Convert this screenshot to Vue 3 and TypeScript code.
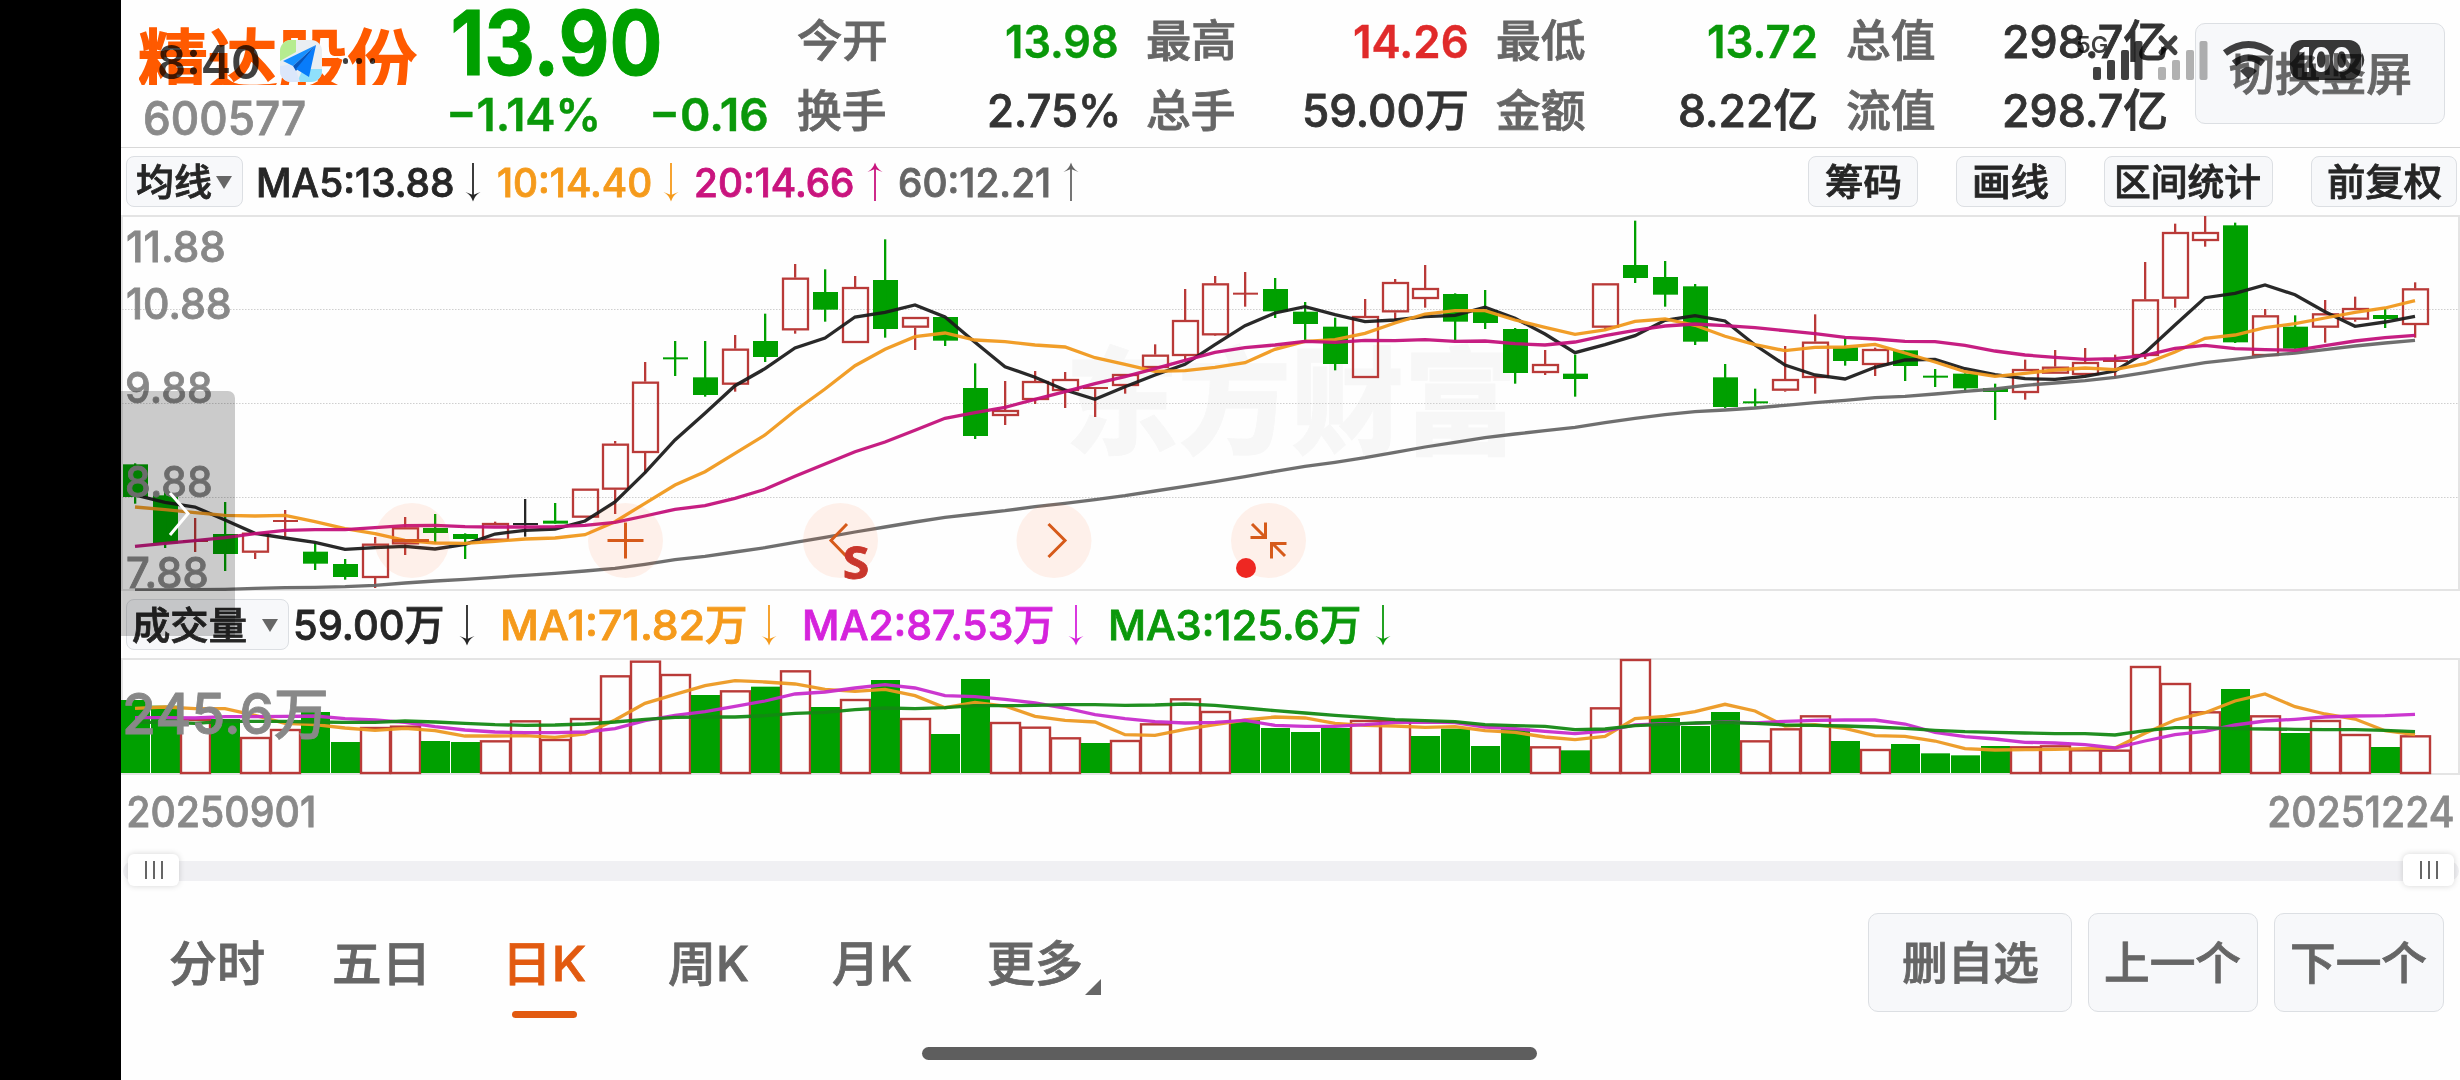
<script setup lang="ts">
import type { Directive } from 'vue'

// Stretches a label horizontally so that its ink covers exactly the given width.
const vFit: Directive<HTMLElement, number> = {
  mounted(el, { value }) {
    const ctx = document.createElement('canvas').getContext('2d')
    if (!ctx) return
    const cs = getComputedStyle(el)
    ctx.font = `${cs.fontWeight} ${cs.fontSize} ${cs.fontFamily}`
    const m = ctx.measureText((el.textContent ?? '').trim())
    const ink = m.actualBoundingBoxLeft + m.actualBoundingBoxRight
    el.style.width = `${value}px`
    el.style.transform = `scaleX(${value / ink}) translateX(${m.actualBoundingBoxLeft}px)`
  },
}

type Stat = { label: string; value: string; w: number; tone: string }
const stats: Stat[] = [
  { label: '今开', value: '13.98', w: 110, tone: 'down' },
  { label: '最高', value: '14.26', w: 112, tone: 'up' },
  { label: '最低', value: '13.72', w: 107, tone: 'down' },
  { label: '总值', value: '298.7亿', w: 161, tone: 'ink' },
  { label: '换手', value: '2.75%', w: 127, tone: 'ink' },
  { label: '总手', value: '59.00万', w: 162, tone: 'ink' },
  { label: '金额', value: '8.22亿', w: 136, tone: 'ink' },
  { label: '流值', value: '298.7亿', w: 161, tone: 'ink' },
]

type Indicator = { text: string; w: number; color: string; up: boolean; gap: number; lead: number }
const priceMas: Indicator[] = [
  { text: 'MA5:13.88', w: 194, color: '#262626', up: false, gap: 12, lead: 16 },
  { text: '10:14.40', w: 153, color: '#f59a1b', up: false, gap: 12, lead: 17.5 },
  { text: '20:14.66', w: 157, color: '#c9147e', up: true, gap: 14, lead: 17 },
  { text: '60:12.21', w: 149, color: '#666666', up: true, gap: 14, lead: 17 },
]
const volMas: Indicator[] = [
  { text: '59.00万', w: 147, color: '#262626', up: false, gap: 17, lead: 6 },
  { text: 'MA1:71.82万', w: 242, color: '#f59a1b', up: false, gap: 16.5, lead: 27.5 },
  { text: 'MA2:87.53万', w: 247, color: '#d523dc', up: false, gap: 16, lead: 28 },
  { text: 'MA3:125.6万', w: 248, color: '#0b980b', up: false, gap: 16, lead: 27 },
]
const tools = [
  { text: '筹码', w: 74, box: 110 },
  { text: '画线', w: 74, box: 110 },
  { text: '区间统计', w: 143, box: 169 },
  { text: '前复权', w: 113, box: 146 },
]
const scale = [
  { text: '11.88', w: 97, y: 231 },
  { text: '10.88', w: 103, y: 288 },
  { text: '9.88', w: 84, y: 372 },
  { text: '8.88', w: 84, y: 466 },
  { text: '7.88', w: 80, y: 557 },
]
const tabs = [
  { text: '分时', w: 94, lead: 0, on: false },
  { text: '五日', w: 90, lead: 70, on: false },
  { text: '日K', w: 75, lead: 86, on: true },
  { text: '周K', w: 79, lead: 84, on: false },
  { text: '月K', w: 78, lead: 85, on: false },
  { text: '更多', w: 92, lead: 78, on: false },
]
const actions = [
  { text: '删自选', w: 135, box: 204 },
  { text: '上一个', w: 134, box: 170 },
  { text: '下一个', w: 134, box: 170 },
]

// Candles: kind, high, body top, body bottom, low; levels are thirds of a pixel below y = 210.
// r = hollow rise, g = solid fall, R / G / K = flat body drawn as a bar.
type Candle = [string, number, number, number, number]
const candles: Candle[] = [
  ['g', 760, 763, 861, 881], ['g', 840, 856, 1000, 1014], ['R', 924, 990, 996, 1026], ['g', 876, 972, 1032, 1083],
  ['r', 968, 968, 1028, 1047], ['R', 900, 930, 936, 980], ['g', 1000, 1025, 1061, 1080], ['g', 1047, 1062, 1101, 1109],
  ['r', 981, 1001, 1104, 1134], ['r', 921, 952, 1003, 1035], ['g', 912, 954, 969, 1000], ['g', 970, 972, 987, 1047],
  ['r', 935, 939, 992, 992], ['K', 867, 939, 945, 980], ['g', 879, 932, 941, 941], ['r', 836, 836, 923, 923],
  ['r', 693, 701, 839, 912], ['r', 456, 515, 729, 790], ['G', 393, 442, 448, 498], ['g', 393, 502, 555, 560],
  ['r', 375, 416, 524, 545], ['g', 311, 393, 441, 456], ['r', 162, 203, 361, 371], ['g', 178, 246, 299, 335],
  ['r', 198, 231, 399, 399], ['g', 88, 210, 357, 383], ['r', 321, 321, 353, 420], ['g', 321, 321, 392, 408],
  ['g', 460, 534, 678, 687], ['r', 513, 600, 618, 645], ['r', 483, 513, 570, 582], ['r', 486, 507, 543, 594],
  ['R', 531, 531, 537, 621], ['r', 492, 492, 528, 551], ['r', 403, 434, 474, 474], ['r', 237, 330, 438, 450],
  ['r', 198, 220, 376, 378], ['R', 186, 248, 254, 290], ['g', 204, 237, 304, 324], ['g', 276, 305, 342, 390],
  ['g', 323, 350, 462, 481], ['r', 267, 318, 504, 504], ['r', 207, 216, 307, 330], ['r', 165, 234, 267, 293],
  ['g', 250, 252, 335, 390], ['g', 240, 300, 339, 357], ['g', 354, 357, 489, 521], ['r', 420, 462, 489, 495],
  ['g', 434, 491, 507, 560], ['r', 220, 220, 353, 358], ['g', 32, 165, 204, 219], ['g', 153, 201, 254, 290],
  ['g', 222, 229, 395, 405], ['g', 462, 502, 591, 594], ['G', 536, 574, 580, 590], ['r', 408, 507, 542, 545],
  ['r', 313, 395, 504, 551], ['g', 384, 412, 453, 467], ['r', 413, 417, 465, 498], ['g', 421, 421, 468, 513],
  ['G', 477, 497, 503, 531], ['g', 490, 491, 535, 543], ['g', 521, 534, 546, 630], ['r', 449, 477, 549, 569],
  ['r', 420, 470, 491, 491], ['r', 414, 456, 495, 495], ['R', 434, 450, 456, 504], ['r', 156, 268, 438, 447],
  ['r', 41, 66, 266, 293], ['r', 18, 66, 93, 110], ['g', 38, 46, 397, 399], ['r', 297, 316, 438, 438],
  ['g', 316, 350, 416, 416], ['r', 270, 310, 353, 398], ['r', 260, 294, 329, 335], ['g', 297, 315, 327, 354],
  ['r', 217, 235, 345, 383],
]
const ma5 = [855, 877, 891, 930, 970, 984, 997, 1018, 1013, 1009, 1017, 1003, 972, 961, 957, 933, 876, 788, 690, 610, 527, 476, 414, 384, 321, 307, 285, 321, 397, 470, 502, 540, 568, 530, 495, 463, 404, 347, 309, 290, 314, 335, 330, 320, 316, 292, 325, 372, 428, 404, 377, 331, 317, 333, 405, 465, 495, 507, 472, 450, 448, 476, 494, 506, 508, 499, 483, 428, 345, 263, 250, 225, 254, 305, 349, 336, 319]
const ma10 = [891, 899, 908, 916, 918, 916, 935, 956, 971, 991, 999, 1000, 994, 987, 984, 974, 935, 880, 825, 785, 730, 675, 602, 537, 467, 418, 380, 369, 390, 395, 405, 411, 443, 463, 484, 482, 472, 458, 418, 394, 389, 370, 339, 312, 302, 302, 330, 352, 373, 360, 334, 327, 346, 379, 404, 422, 412, 411, 403, 429, 456, 485, 499, 490, 480, 474, 479, 461, 426, 385, 375, 353, 341, 324, 307, 294, 272]
const ma20 = [1009, 1000, 992, 983, 971, 961, 959, 959, 953, 947, 946, 950, 951, 951, 950, 946, 937, 918, 898, 887, 865, 838, 799, 762, 725, 696, 661, 625, 608, 592, 568, 545, 521, 500, 476, 451, 427, 413, 405, 394, 397, 391, 392, 389, 394, 393, 401, 405, 396, 377, 361, 348, 342, 347, 353, 362, 371, 382, 387, 394, 395, 406, 423, 435, 442, 448, 446, 436, 415, 406, 416, 419, 421, 407, 393, 383, 376]
const ma60 = [1140, 1140, 1139, 1138, 1135, 1133, 1132, 1130, 1126, 1119, 1113, 1108, 1102, 1096, 1090, 1083, 1075, 1063, 1049, 1039, 1026, 1013, 997, 982, 966, 951, 936, 922, 912, 902, 890, 880, 869, 857, 843, 829, 815, 800, 784, 769, 757, 743, 727, 711, 697, 683, 672, 662, 652, 638, 625, 614, 605, 600, 594, 586, 578, 571, 563, 559, 552, 544, 537, 526, 519, 512, 502, 488, 473, 458, 448, 437, 429, 419, 408, 399, 391]

// Volume bars: top edge in thirds of a pixel below y = 640, negative for falling days.
const volumes = [-180, -197, 237, -237, 291, 267, -216, -306, 261, 257, -303, -306, 301, 241, 297, 234, 106, 62, 102, -165, 151, -140, 91, -201, 177, -120, 234, -282, -117, 246, 260, 292, -309, 300, 250, 175, 213, -240, -264, -276, -264, 240, 240, -288, -266, -318, -266, 319, -331, 202, 57, -234, -258, -216, 301, 265, 226, -303, 327, -312, -340, -346, -318, 319, 316, 328, 329, 78, 129, 214, -147, 226, -279, 240, 282, -321, 286]
const vma1 = [205, 201, 206, 206, 226, 250, 254, 264, 271, 265, 272, 288, 288, 287, 292, 282, 240, 190, 163, 137, 122, 126, 132, 148, 154, 148, 167, 203, 187, 198, 229, 241, 246, 284, 286, 268, 254, 240, 231, 234, 250, 256, 258, 262, 260, 272, 277, 291, 299, 289, 236, 229, 215, 193, 213, 258, 254, 265, 287, 289, 303, 326, 330, 329, 328, 326, 324, 280, 240, 218, 183, 162, 200, 222, 237, 272, 284]
const vma2 = [233, 233, 234, 230, 230, 229, 228, 236, 240, 247, 260, 270, 276, 278, 278, 276, 266, 242, 226, 215, 199, 183, 162, 156, 144, 134, 144, 167, 170, 178, 189, 204, 224, 236, 245, 249, 247, 241, 256, 259, 259, 254, 247, 246, 248, 261, 266, 274, 281, 273, 255, 251, 250, 246, 249, 244, 241, 240, 240, 252, 277, 290, 297, 307, 309, 314, 324, 303, 284, 274, 255, 243, 238, 231, 228, 227, 223]
const vma3 = [247, 247, 250, 244, 244, 244, 246, 247, 247, 243, 246, 250, 254, 256, 255, 252, 246, 238, 232, 231, 231, 227, 220, 217, 209, 204, 206, 203, 197, 197, 196, 194, 194, 196, 195, 192, 196, 204, 212, 219, 226, 232, 239, 242, 245, 254, 257, 259, 269, 267, 257, 253, 249, 247, 250, 255, 256, 258, 261, 265, 271, 275, 277, 279, 281, 281, 285, 272, 263, 263, 266, 267, 268, 269, 269, 271, 275]

const cx = (i: number) => 135 + 30 * i
const py = (v: number) => 210 + v / 3
const vy = (v: number) => 640 + v / 3
const line = (vals: number[], y: (v: number) => number) =>
  vals.map((v, i) => `${cx(i)},${y(v).toFixed(1)}`).join(' ')

const RED = '#b93a38'
const tint = (k: string) => (k === 'K' ? '#262626' : k.toLowerCase() === 'g' ? '#00a000' : RED)

const priceLines = [
  { pts: line(ma60, py), color: '#666' },
  { pts: line(ma5, py), color: '#1c1c1c' },
  { pts: line(ma10, py), color: '#f0981c' },
  { pts: line(ma20, py), color: '#c2107a' },
]
const volLines = [
  { pts: line(vma1, vy), color: '#ec9820' },
  { pts: line(vma2, vy), color: '#c82acc' },
  { pts: line(vma3, vy), color: '#128812' },
]
</script>

<template>
  <div class="screen">
    <div class="notch"></div>
    <main class="page">
      <header class="head">
        <div class="ident">
          <div class="name"><span v-fit="277" class="t">精达股份</span></div>
          <span v-fit="160" class="t code">600577</span>
        </div>
        <div class="quote">
          <span v-fit="205" class="t price">13.90</span>
          <div class="change">
            <span v-fit="147" class="t">−1.14%</span>
            <span v-fit="114" class="t">−0.16</span>
          </div>
        </div>
        <div class="stats">
          <div v-for="s in stats" :key="s.label" class="stat">
            <span v-fit="87.5" class="t lab">{{ s.label }}</span>
            <span v-fit="s.w" class="t" :class="s.tone">{{ s.value }}</span>
          </div>
        </div>
        <button class="btn rotate"><span v-fit="180" class="t">切换竖屏</span></button>
      </header>

      <section class="bar top">
        <button class="btn pick ma"><span v-fit="74" class="t">均线</span><i class="tri"></i></button>
        <template v-for="m in priceMas" :key="m.text">
          <span v-fit="m.w" class="t low" :style="{ color: m.color, marginLeft: m.lead + 'px' }">{{ m.text }}</span>
          <svg class="arr" width="16" height="40" :style="{ color: m.color, marginLeft: m.gap + 'px' }">
            <g :transform="m.up ? 'rotate(180 8 20)' : ''">
              <path d="M8 1V34" stroke="currentColor" stroke-width="1.8" />
              <path d="M.5 30Q6 33 8 39.500Q10 33 15.500 30L8 33Z" fill="currentColor" />
            </g>
          </svg>
        </template>
        <div class="tools">
          <button v-for="b in tools" :key="b.text" class="btn" :style="{ width: b.box + 'px' }">
            <span v-fit="b.w" class="t">{{ b.text }}</span>
          </button>
        </div>
      </section>

      <section class="chart">
        <span v-fit="440" class="t mark">东方财富</span>
        <svg class="plot" width="2339" height="376" viewBox="121 215 2339 376">
          <path d="M122 216H2459V590H122Z" fill="none" stroke="#e4e4e4" stroke-width="2" />
          <path d="M122 309.500H2458M122 403.500H2458M122 497.500H2458" stroke="#cfcfcf" stroke-dasharray="1.500 1.500" />
          <g v-for="(c, i) in candles" :key="i">
            <rect v-if="c[0] === 'r'" :x="cx(i) - 12" :y="py(c[2]) + 1" width="25" :height="(c[3] - c[2]) / 3 - 2" fill="none" :stroke="RED" stroke-width="2.3" />
            <rect v-else :x="cx(i) - 12" :y="py(c[2])" width="25" :height="(c[3] - c[2]) / 3" :fill="tint(c[0])" />
            <template v-if="c[0] === 'r'">
              <rect :x="cx(i) - 1" :y="py(c[1])" width="2.3" :height="(c[2] - c[1]) / 3" :fill="RED" />
              <rect :x="cx(i) - 1" :y="py(c[3])" width="2.3" :height="(c[4] - c[3]) / 3" :fill="RED" />
            </template>
            <rect v-else :x="cx(i) - 1" :y="py(c[1])" width="2.3" :height="(c[4] - c[1]) / 3" :fill="tint(c[0])" />
          </g>
          <polyline v-for="l in priceLines" :key="l.color" :points="l.pts" fill="none" :stroke="l.color" stroke-width="3.3" opacity=".94" />
        </svg>
        <span v-for="s in scale" :key="s.text" v-fit="s.w" class="t tick" :style="{ top: s.y - 215 + 'px' }">{{ s.text }}</span>
        <svg class="plot" width="2339" height="376" viewBox="121 215 2339 376" fill="none" stroke="#d65a1a" stroke-width="3">
          <g fill="#ff5a14" fill-opacity=".085" stroke="none">
            <circle v-for="x in [412, 625.5, 840.5, 1054, 1268.5]" :key="x" :cx="x" cy="540.500" r="37.500" />
          </g>
          <path d="M393 540.500H429M607.500 540.500H643.500M625.500 522.500V558.500" />
          <path d="M847 524L831 540.500L847 557M1048.500 524L1065 540.500L1048.500 557" />
          <path d="M1252 524L1265 537M1265.500 522.500V537.500H1250.500M1285 556L1272 543M1271.500 558.500V543.500H1286.500" />
          <circle cx="1246" cy="568" r="10" fill="#ee2722" stroke="none" />
        </svg>
        <span v-fit="23" class="t trade">S</span>
      </section>

      <section class="bar vol">
        <button class="btn pick vl"><span v-fit="113" class="t">成交量</span><i class="tri"></i></button>
        <template v-for="m in volMas" :key="m.text">
          <span v-fit="m.w" class="t low" :style="{ color: m.color, marginLeft: m.lead + 'px' }">{{ m.text }}</span>
          <svg class="arr" width="16" height="42" :style="{ color: m.color, marginLeft: m.gap + 'px' }">
            <path d="M8 1V36" stroke="currentColor" stroke-width="1.8" />
            <path d="M.5 32Q6 35 8 41.500Q10 35 15.500 32L8 35Z" fill="currentColor" />
          </svg>
        </template>
      </section>

      <section class="volume">
        <svg class="plot" width="2339" height="118" viewBox="121 658 2339 118">
          <path d="M122 659H2459V774H122Z" fill="none" stroke="#e4e4e4" stroke-width="2" />
          <template v-for="(v, i) in volumes" :key="i">
            <rect v-if="v < 0" :x="cx(i) - 14" :y="vy(-v)" width="29" :height="773 - vy(-v)" fill="#00a000" />
            <rect v-else :x="cx(i) - 14" :y="vy(v) + 1" width="29" :height="772 - vy(v)" fill="#fefefe" :stroke="RED" stroke-width="2.4" />
          </template>
          <polyline v-for="l in volLines" :key="l.color" :points="l.pts" fill="none" :stroke="l.color" stroke-width="3.3" opacity=".94" />
        </svg>
        <span v-fit="201" class="t vtick">245.6万</span>
      </section>

      <div class="dates"><span v-fit="186" class="t">20250901</span><span v-fit="184" class="t">20251224</span></div>

      <div class="range">
        <div class="track"></div>
        <div class="grip a"><i></i><i></i><i></i></div>
        <div class="grip b"><i></i><i></i><i></i></div>
      </div>

      <footer class="foot">
        <nav class="tabs">
          <div v-for="t in tabs" :key="t.text" class="tab" :class="{ on: t.on }" :style="{ marginLeft: t.lead + 'px' }">
            <span v-fit="t.w" class="t low">{{ t.text }}</span>
          </div>
          <svg class="more" width="16" height="16"><path d="M16 0V16H0Z" fill="#666" /></svg>
        </nav>
        <div class="acts">
          <button v-for="b in actions" :key="b.text" class="btn" :style="{ width: b.box + 'px' }">
            <span v-fit="b.w" class="t low">{{ b.text }}</span>
          </button>
        </div>
      </footer>
      <div class="home"></div>
    </main>

    <div class="drawer">
      <svg width="114" height="245" fill="none" stroke="#fff" stroke-width="3"><path d="M49 102L67 122.500L49 144" /></svg>
    </div>

    <div class="status-l">
      <span v-fit="100" class="t">8:40</span>
      <svg class="app" width="42" height="42" viewBox="0 0 42 42">
        <defs><clipPath id="tile"><rect width="42" height="42" rx="11" /></clipPath></defs>
        <g clip-path="url(#tile)">
          <rect width="42" height="42" fill="#e9eef2" />
          <path d="M0 0H16V12L0 21Z" fill="#b5ec90" />
          <path d="M17 42L23 29H42V42Z" fill="#8fe0fb" />
          <path d="M0 26L14 24L20 42H0Z" fill="#dbe7fb" />
          <path d="M36 5L3 21L13 26Z" fill="#1690ff" />
          <path d="M36 5L13 26L16 31Z" fill="#0756bd" />
          <path d="M36 5L16 29L29 37Z" fill="#087cfa" />
        </g>
      </svg>
      <i class="dot"></i><i class="dot"></i><i class="dot"></i>
    </div>

    <div class="status-r">
      <span v-fit="30" class="t net">5G</span>
      <svg class="radio" width="300" height="50" viewBox="2070 34 300 50">
        <g fill="#000" fill-opacity=".75">
          <rect x="2093" y="67" width="8" height="13" rx="2" /><rect x="2107" y="60" width="8" height="20" rx="2" />
          <rect x="2121" y="50" width="8" height="30" rx="2" /><rect x="2134.500" y="41" width="8" height="39" rx="2" />
        </g>
        <g fill="#000" fill-opacity=".3">
          <rect x="2158" y="67" width="8" height="13" rx="2" /><rect x="2172" y="60" width="8" height="20" rx="2" />
          <rect x="2186" y="50" width="8" height="30" rx="2" /><rect x="2199.500" y="41" width="8" height="39" rx="2" />
        </g>
        <g fill="none" stroke="#000" stroke-opacity=".75">
          <path d="M2161 38L2175 52.500M2175 38L2161 52.500" stroke-width="5" stroke-linecap="round" />
          <path d="M2225 53Q2248.500 36 2272 53M2234 63.500Q2248.500 52 2263 63.500" stroke-width="7" />
        </g>
        <path d="M2240 71Q2248.500 63 2257 71L2248.500 79.500Z" fill="#000" fill-opacity=".75" />
        <rect x="2290" y="40" width="71" height="40" rx="12" fill="#000" fill-opacity=".78" />
        <path d="M2361.500 52Q2367 60 2361.500 68Z" fill="#000" fill-opacity=".78" />
      </svg>
      <span v-fit="52" class="t pct">100</span>
    </div>
  </div>
</template>

<style>
body { margin: 0; }
</style>

<style scoped>
.screen { position: relative; display: flex; width: 2460px; height: 1080px; overflow: hidden; background: #fefefe; font-family: Inter, "Noto Sans CJK SC", sans-serif; font-weight: 500; color: #262626; }
.notch { flex: none; width: 121px; background: #000; }
.page { flex: none; width: 2339px; display: flex; flex-direction: column; }
.t { display: inline-block; flex: none; white-space: nowrap; text-align: left; line-height: 1; transform-origin: 0 50%; -webkit-text-stroke: .8px currentColor; }
.low { padding-top: 2px; }
.btn { display: flex; align-items: center; justify-content: center; flex: none; box-sizing: border-box; padding: 0; margin: 0; font: inherit; color: inherit; background: #f7f8fa; border: 1.5px solid #dcdfe3; border-radius: 8px; }

.head { display: flex; height: 147px; box-sizing: content-box; border-bottom: 1px solid #d8d8d8; }
.ident { width: 277px; margin-left: 17.5px; padding-top: 20px; }
.name { height: 65px; overflow: hidden; font-size: 70px; color: #ff5a00; margin-right: -4px; }
.name .t { -webkit-text-stroke-width: 2px; }
.code { font-size: 46px; color: #8a8a8a; margin: 10px 0 0 6px; }
.quote { width: 318px; margin-left: 34px; color: #00a000; }
.price { font-size: 89px; font-weight: 700; margin: -2px 0 0 4.5px; display: block; -webkit-text-stroke-width: 1px; }
.change { display: flex; justify-content: space-between; font-size: 45px; font-weight: 600; margin-top: 5px; color: #0a980a; padding: 0 .5px; }
.change .t, .down, .up { -webkit-text-stroke-width: .4px; }
.stats { display: grid; grid-template-columns: repeat(4, 319.5px); grid-auto-rows: 69.5px; column-gap: 30.2px; margin: 6.5px .5px 0 30px; font-size: 45px; height: 140px; }
.stat { display: flex; align-items: center; justify-content: space-between; }
.lab { color: #666; font-size: 44px; }
.down { color: #0a980a; font-weight: 600; }
.up { color: #e02a2a; font-weight: 600; }
.ink { color: #333; }
.rotate { width: 250px; height: 101px; margin: 23px 0 0 28px; padding-top: 2px; font-size: 45px; color: #666; border-radius: 10px; }

.bar { display: flex; align-items: center; height: 67px; flex: none; }
.top { font-size: 39px; }
.bar .btn { height: 51px; font-size: 37px; padding-top: 1px; }
.pick.ma { width: 117px; margin-left: 4.5px; justify-content: flex-start; padding-left: 10px; }
.bar .pick.vl { width: 163.5px; margin-left: 4.5px; justify-content: flex-start; padding-left: 6px; font-size: 38px; }
.tri { width: 0; height: 0; border: 8px solid transparent; border-top: 13px solid #666; border-bottom: 0; margin-left: 5px; }
.vl .tri { margin-left: 16px; }
.arr { flex: none; display: block; overflow: visible; }
.tools { display: flex; gap: 38px; margin-left: auto; margin-right: 3px; }
.vol { font-size: 41.5px; }

.chart, .volume { position: relative; flex: none; }
.chart { height: 376px; }
.volume { height: 118px; }
.plot { position: absolute; left: 0; top: 0; display: block; }
.mark { position: absolute; left: 949px; top: 130px; font-size: 116px; font-weight: 900; color: #f7f7f7; }
.tick { position: absolute; left: 5.5px; font-size: 42.5px; line-height: 31px; color: #888; }
.trade { position: absolute; left: 724px; top: 325px; font: 700 44px/44px "Open Sans", sans-serif; color: #c9362c; }
.vtick { position: absolute; left: 4px; top: 28px; font-size: 56px; color: #888; }

.dates { display: flex; justify-content: space-between; padding: 15px 7px 0; font-size: 42px; color: #8a8a8a; height: 63px; box-sizing: border-box; flex: none; margin-bottom: 15px; }
.range { position: relative; height: 32px; flex: none; }
.track { position: absolute; left: 2px; right: 1px; top: 7px; height: 20px; border-radius: 10px; background: #f0f0f3; }
.grip { position: absolute; top: 0; width: 51px; height: 32px; border-radius: 6px; background: #fff; box-shadow: 0 0 6px rgba(0, 0, 0, .16); display: flex; align-items: center; justify-content: center; gap: 6px; }
.grip.a { left: 7px; }
.grip.b { right: 6px; }
.grip i { width: 2px; height: 18px; background: #666; }

.foot { display: flex; justify-content: space-between; margin-top: 27px; height: 99px; flex: none; color: #666; }
.tabs { display: flex; align-items: center; margin-left: 49px; font-size: 48px; }
.tab { position: relative; display: flex; align-items: center; height: 99px; }
.on { color: #e25a10; }
.on::after { content: ""; position: absolute; left: 2px; top: 98px; width: 65px; height: 7px; border-radius: 4px; background: #e25a10; }
.more { margin: 48px 0 0 4px; }
.acts { display: flex; gap: 16px; margin-right: 16px; font-size: 45px; }
.acts .btn { border-radius: 10px; }
.home { width: 615px; height: 13px; margin: 35px 0 0 801px; border-radius: 7px; background: #5e5e5e; flex: none; }

.drawer { position: absolute; left: 121px; top: 391px; width: 114px; height: 245px; background: rgba(0, 0, 0, .2); border-radius: 0 7px 0 0; }
.status-l { position: absolute; left: 159px; top: 38px; height: 46px; display: flex; align-items: center; font-size: 47px; color: rgba(0, 0, 0, .75); }
.status-l .t { -webkit-text-stroke-width: 0; font-weight: 600; }
.app { margin: 0 20.500px 0 21px; }
.dot { width: 5.5px; height: 5.5px; border-radius: 50%; background: rgba(0, 0, 0, .75); margin-right: 8px; }
.status-r { position: absolute; left: 2070px; top: 34px; width: 300px; height: 50px; mix-blend-mode: multiply; }
.status-r .t { -webkit-text-stroke-width: 0; }
.radio { display: block; }
.net { position: absolute; left: 7px; top: 0; font-size: 23px; font-weight: 600; color: rgba(0, 0, 0, .75); }
.pct { position: absolute; left: 229px; top: 9px; font-size: 34px; font-weight: 700; color: #fff; }
</style>
